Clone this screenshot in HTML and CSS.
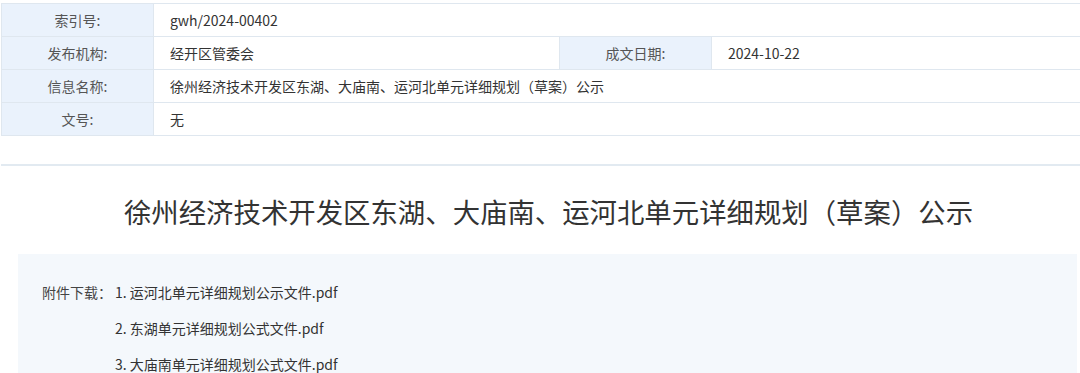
FILE: index.html
```html
<!DOCTYPE html>
<html lang="zh-CN">
<head>
    <meta charset="UTF-8" />
    <title>徐州经济技术开发区东湖、大庙南、运河北单元详细规划（草案）公示</title>
    <link rel="stylesheet" href="styles.css">
</head>
<body>
<table class="meta">
    <colgroup>
        <col class="col-label">
        <col class="col-value">
        <col class="col-label">
        <col>
    </colgroup>
    <tr>
        <th>索引号:</th>
        <td colspan="3">gwh/2024-00402</td>
    </tr>
    <tr>
        <th>发布机构:</th>
        <td>经开区管委会</td>
        <th>成文日期:</th>
        <td>2024-10-22</td>
    </tr>
    <tr>
        <th>信息名称:</th>
        <td colspan="3">徐州经济技术开发区东湖、大庙南、运河北单元详细规划（草案）公示</td>
    </tr>
    <tr>
        <th>文号:</th>
        <td colspan="3">无</td>
    </tr>
</table>

<hr class="divider">

<h1 class="title">徐州经济技术开发区东湖、大庙南、运河北单元详细规划（草案）公示</h1>

<div class="attach">
    <span class="attach-label">附件下载：</span>
    <ul class="attach-list">
        <li><a href="#">1. 运河北单元详细规划公示文件.pdf</a></li>
        <li><a href="#">2. 东湖单元详细规划公式文件.pdf</a></li>
        <li><a href="#">3. 大庙南单元详细规划公式文件.pdf</a></li>
    </ul>
</div>
</body>
</html>
```

FILE: styles.css
```css
body {
  margin: 0;
  padding: 3px 0 0 1px;
  font-family: "Microsoft YaHei", "Noto Sans CJK SC", sans-serif;
  font-size: 14px;
  color: #333;
  background: #fff;
}
.meta {
  width: 1080px;
  border-collapse: collapse;
  table-layout: fixed;
}
.col-label {
  width: 152px;
}
.col-value {
  width: 406px;
}
.meta th,
.meta td {
  height: 32px;
  padding: 0;
  border: 1px solid #dfe7ef;
  font-weight: normal;
}
.meta th {
  background: #eaf2fc;
  color: #555;
  text-align: center;
}
.meta td {
  padding-left: 16px;
  text-align: left;
}
.divider {
  margin: 28px 0 0 0;
  border: none;
  border-top: 2px solid #e2eaf1;
}
.title {
  margin: 24px 0 0 0;
  height: 42px;
  line-height: 42px;
  font-size: 27.4px;
  font-weight: normal;
  text-align: center;
  color: #333;
  padding-left: 16px;
}
.attach {
  display: flex;
  margin: 22px 3px 0 17px;
  padding: 20px 24px;
  background: #f4f8fc;
}
.attach-label {
  color: #444;
  line-height: 36px;
  width: 73px;
}
.attach-list {
  list-style: none;
  margin: 0;
  padding: 0;
}
.attach-list li {
  line-height: 36px;
}
.attach-list a {
  color: #333;
  text-decoration: none;
}
```
